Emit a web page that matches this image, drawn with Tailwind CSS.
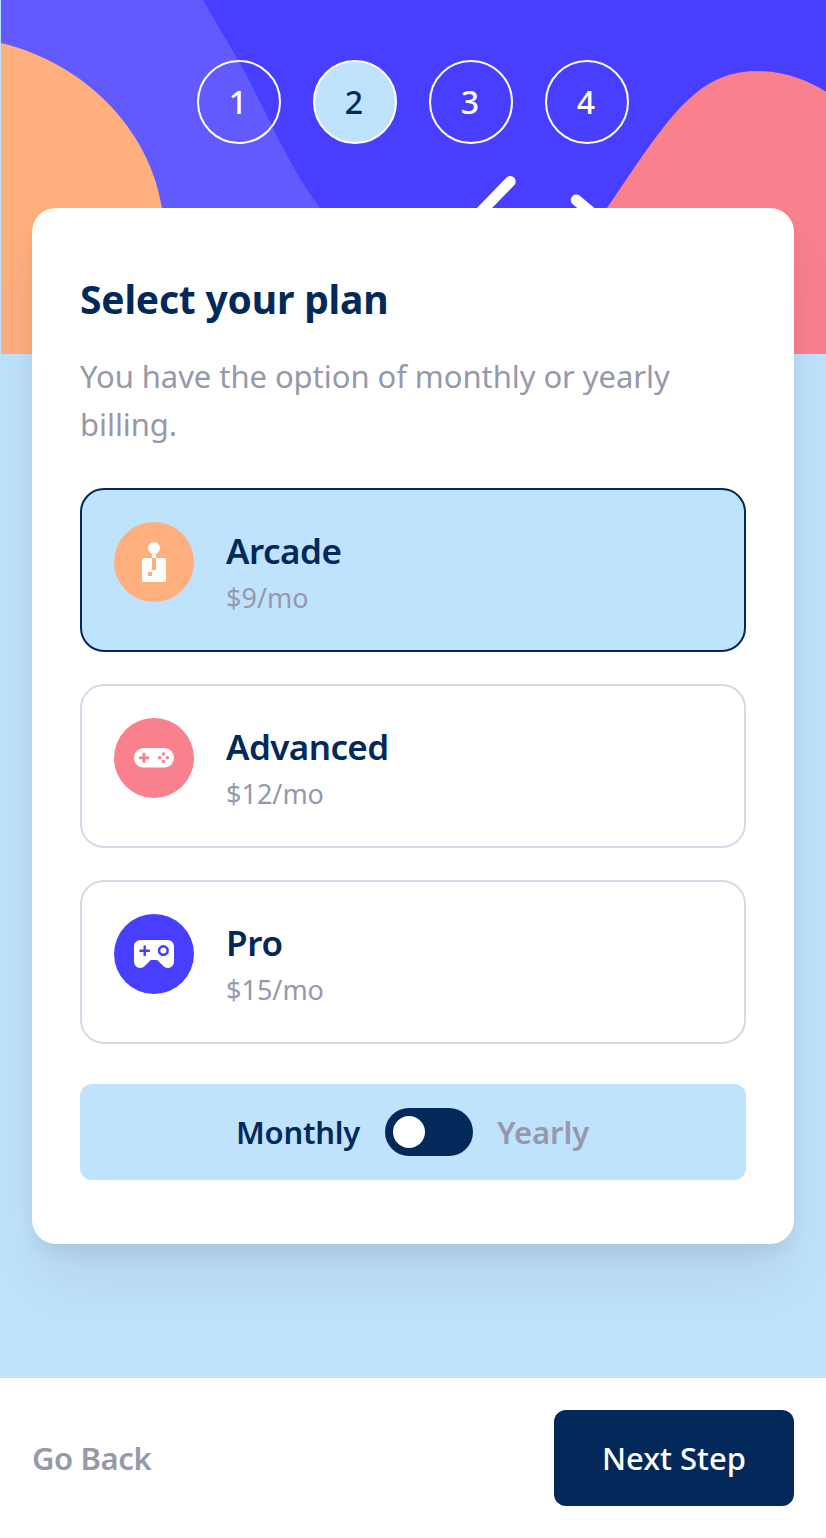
<!DOCTYPE html>
<html lang="en">
<head>
<meta charset="utf-8">
<title>Select your plan</title>
<script src="https://cdn.jsdelivr.net/npm/@tailwindcss/browser@4"></script>
</head>
<body class="bg-[#bfe2fd] text-[#02295a] font-['Noto_Sans',sans-serif] font-medium">
<div class="flex flex-col min-h-[1538px] relative">
  <svg class="absolute top-0 left-px w-[824.5px] h-[354px]" viewBox="1 0 824.5 354" preserveAspectRatio="none" fill="none">
    <path fill="#483eff" d="M0 0h826v354H0z"/>
    <path fill="#6259ff" d="M0 0H203L238 60C262 103 285 155 300 178Q308 192 320 208V354H0Z"/>
    <path fill="#ffaf7e" d="M0 42.700L1 43C85 63 150 130 162 208V354H0Z"/>
    <path fill="#f9818e" d="M607 208L634 168C680 101 707 71 758 71C785 71 808 81 826 91.500V354H607Z"/>
    <path stroke="#fff" stroke-width="11" stroke-linecap="round" d="M510.200 181.500L470 223M576.300 200L606 225"/>
  </svg>
  <header class="relative flex justify-center gap-8 pt-[60px] text-[32px] text-white">
    <div class="size-[84px] rounded-full border-2 border-white flex items-center justify-center"><span class="-translate-x-px">1</span></div>
    <div class="size-[84px] rounded-full border-2 border-white bg-[#bfe2fd] text-[#02295a] flex items-center justify-center"><span class="-translate-x-px">2</span></div>
    <div class="size-[84px] rounded-full border-2 border-white flex items-center justify-center"><span class="-translate-x-px">3</span></div>
    <div class="size-[84px] rounded-full border-2 border-white flex items-center justify-center"><span class="-translate-x-px">4</span></div>
  </header>
  <main class="relative mx-8 mt-16 h-[1036px] rounded-3xl bg-white px-12 pt-[63px] shadow-[0_40px_60px_-6px_rgba(0,0,0,0.07),0_12px_20px_-4px_rgba(0,0,0,0.07)]">
    <h1 class="text-[39px] leading-[56px] font-bold whitespace-nowrap tracking-[-0.19px]">Select your plan</h1>
    <p class="mt-[25px] text-[31px] leading-[48px] font-normal text-[#9699ab] whitespace-nowrap tracking-[-0.06px]">You have the option of monthly or yearly<br>billing.</p>
    <div class="mt-10 flex flex-col gap-8">
      <div class="flex gap-8 rounded-3xl border-2 border-[#02295a] bg-[#bfe2fd] p-8">
        <svg class="size-20" viewBox="0 0 40 40"><circle cx="20" cy="20" r="20" fill="#ffaf7e"/><path fill="#fff" d="M25 18h-4v6h-2v-6h-4a1 1 0 0 0-1 1v10a1 1 0 0 0 1 1h10a1 1 0 0 0 1-1V19a1 1 0 0 0-1-1Zm-6 9h-2v-2h2v2Zm2-11.170a3 3 0 1 0-2 0V18h2v-2.170Z"/></svg>
        <div><h2 class="pt-0.5 text-[35px] leading-[54px] font-semibold tracking-[-0.5px]">Arcade</h2><p class="text-[27px] leading-10 font-normal text-[#9699ab]">$9/mo</p></div>
      </div>
      <div class="flex gap-8 rounded-3xl border-2 border-[#d6d9e6] p-8">
        <svg class="size-20" viewBox="0 0 40 40"><circle cx="20" cy="20" r="20" fill="#f9818e"/><rect x="10" y="15" width="20" height="9.800" rx="4.900" fill="#fff"/><g fill="#f9818e"><rect x="12.500" y="19.200" width="5" height="1.450" rx=".2"/><rect x="14.250" y="17.400" width="1.450" height="5" rx=".2"/><circle cx="24.750" cy="18.050" r=".87"/><circle cx="24.750" cy="21.700" r=".87"/><circle cx="22.850" cy="19.870" r=".87"/><circle cx="26.650" cy="19.870" r=".87"/></g></svg>
        <div><h2 class="pt-0.5 text-[35px] leading-[54px] font-semibold tracking-[-0.6px]">Advanced</h2><p class="text-[27px] leading-10 font-normal text-[#9699ab]">$12/mo</p></div>
      </div>
      <div class="flex gap-8 rounded-3xl border-2 border-[#d6d9e6] p-8">
        <svg class="size-20" viewBox="0 0 40 40"><circle cx="20" cy="20" r="20" fill="#483eff"/><path fill="#fff" d="M13.200 13h13.600A3.200 3.200 0 0 1 30 16.200v7.600c0 1.800-1.300 3.200-3 3.200-1 0-1.800-.4-2.500-1.100L21.600 23h-3.200l-2.900 2.900c-.7.7-1.500 1.100-2.500 1.100-1.700 0-3-1.400-3-3.200v-7.600A3.200 3.200 0 0 1 13.200 13Z"/><path d="M13.200 18.350h4.300M15.350 16.200v4.300" stroke="#483eff" stroke-width="1.200" stroke-linecap="round"/><circle cx="24.670" cy="18.300" r="2.150" fill="none" stroke="#483eff" stroke-width="1.300"/></svg>
        <div><h2 class="pt-0.5 text-[35px] leading-[54px] font-semibold tracking-[-0.3px]">Pro</h2><p class="text-[27px] leading-10 font-normal text-[#9699ab]">$15/mo</p></div>
      </div>
    </div>
    <div class="mt-10 h-24 rounded-xl bg-[#bfe2fd] flex items-center justify-center gap-6 text-[31px] font-semibold">
      <span class="w-[125px] whitespace-nowrap tracking-[-0.25px]">Monthly</span>
      <span class="w-[88px] h-12 rounded-full bg-[#02295a] p-2"><span class="block size-8 rounded-full bg-white"></span></span>
      <span class="w-[93px] whitespace-nowrap tracking-[-0.1px] text-[#9699ab]">Yearly</span>
    </div>
  </main>
  <footer class="mt-auto h-40 bg-white px-8 flex items-center justify-between text-[31px]">
    <span class="font-semibold text-[#9699ab] tracking-[-0.4px]">Go Back</span>
    <button class="w-60 h-24 rounded-xl bg-[#02295a] text-white whitespace-nowrap">Next Step</button>
  </footer>
</div>
</body>
</html>
